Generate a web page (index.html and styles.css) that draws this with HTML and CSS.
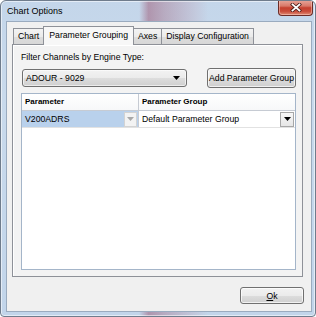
FILE: index.html
```html
<!DOCTYPE html>
<html>
<head>
<meta charset="utf-8">
<title>Chart Options</title>
<link rel="stylesheet" href="styles.css">
</head>
<body>
<div class="window">
  <div class="titlebar">
    <span class="title">Chart Options</span>
    <div class="close">
      <svg width="12" height="9" viewBox="0 0 12 9"><path d="M2.5 1.5 L9.5 7.5 M9.5 1.5 L2.5 7.5" stroke="#4a1c18" stroke-width="3.4" stroke-linecap="square"/><path d="M2.5 1.5 L9.5 7.5 M9.5 1.5 L2.5 7.5" stroke="#ffffff" stroke-width="1.8" stroke-linecap="square"/></svg>
    </div>
  </div>
  <div class="client">
    <div class="tabs">
      <div class="tab">Chart</div>
      <div class="tab active">Parameter Grouping</div>
      <div class="tab">Axes</div>
      <div class="tab">Display Configuration</div>
    </div>
    <div class="panel">
      <div class="label">Filter Channels by Engine Type:</div>
      <div class="controls">
        <div class="combo">
          <span class="combo-text">ADOUR - 9029</span>
          <svg class="arrow" width="7" height="4" viewBox="0 0 7 4"><polygon points="0,0 7,0 3.5,4" fill="#000"/></svg>
        </div>
        <div class="btn add">Add Parameter Group</div>
      </div>
      <div class="grid">
        <div class="grid-head">
          <div class="hc c1">Parameter</div>
          <div class="hc c2">Parameter Group</div>
        </div>
        <div class="grid-row">
          <div class="cell c1 sel">
            <span class="cell-text">V200ADRS</span>
            <span class="dd dis"><svg width="7" height="4" viewBox="0 0 7 4"><polygon points="0,0 7,0 3.5,4" fill="#a8a8a8"/></svg></span>
          </div>
          <div class="cell c2">
            <span class="cell-text">Default Parameter Group</span>
            <span class="dd"><svg width="7" height="4" viewBox="0 0 7 4"><polygon points="0,0 7,0 3.5,4" fill="#000"/></svg></span>
          </div>
        </div>
      </div>
    </div>
    <div class="footer">
      <div class="btn ok"><u>O</u>k</div>
    </div>
  </div>
</div>
</body>
</html>
```

FILE: styles.css
```css
* { box-sizing: border-box; }
html, body { margin: 0; padding: 0; }
body {
  width: 316px;
  height: 317px;
  overflow: hidden;
  font-family: "Liberation Sans", Arial, sans-serif;
  font-size: 8.7px;
  color: #000;
  background: #ffffff;
}
.window {
  width: 316px;
  height: 317px;
  border: 1px solid #6f7c8c;
  border-radius: 6px 6px 4px 4px;
  display: flex;
  flex-direction: column;
  background:
    linear-gradient(90deg, rgba(0,0,0,0) 0%, rgba(0,0,0,0) 44%, rgba(150,70,100,0.45) 47%, rgba(160,90,115,0.35) 52%, rgba(190,150,170,0.2) 62%, rgba(0,0,0,0) 66%, rgba(0,0,0,0) 100%),
    linear-gradient(180deg, #c4d6ea 0%, #c9daec 30%, #c2d5ea 100%);
  box-shadow: inset 0 0 0 1px rgba(255,255,255,0.55);
  overflow: hidden;
}
.titlebar {
  height: 20px;
  display: flex;
  justify-content: space-between;
  align-items: flex-start;
  flex: none;
}
.title {
  padding-left: 6px;
  padding-top: 5px;
  font-size: 9px;
  line-height: 11px;
  color: #000;
}
.close {
  width: 35px;
  height: 16px;
  margin-top: -1px;
  margin-right: 2px;
  border: 1px solid #6b2c27;
  border-top: none;
  border-radius: 0 0 4px 4px;
  background: linear-gradient(180deg, #e7a89c 0%, #d9796a 40%, #c5402f 52%, #c94c3a 75%, #de8b74 100%);
  box-shadow: inset 0 0 0 1px rgba(255,210,200,0.5);
  display: flex;
  align-items: center;
  justify-content: center;
}
.client {
  flex: 1;
  margin: 0 3px 4px 5px;
  border: 1px solid #9aabbf;
  background: #f0f0f0;
  display: flex;
  flex-direction: column;
  padding: 4px 8px 0 5px;
}
.tabs {
  display: flex;
  align-items: flex-end;
  height: 19px;
  margin-left: 1px;
  margin-bottom: -1px;
  position: relative;
  z-index: 1;
  flex: none;
}
.tab {
  height: 16px;
  margin-bottom: 1px;
  padding: 0 4px;
  line-height: 15px;
  border: 1px solid #8e9198;
  border-bottom: none;
  border-right: none;
  background: linear-gradient(180deg, #f3f3f3 0%, #ebebeb 50%, #dddddd 51%, #d7d7d7 100%);
  white-space: nowrap;
}
.tab:last-child { border-right: 1px solid #8e9198; }
.tab.active {
  height: 19px;
  margin-bottom: 0;
  padding: 0 5px;
  line-height: 17px;
  border-right: 1px solid #8e9198;
  background: #f7f7f7;
}
.tab.active + .tab { border-left: none; }
.panel {
  flex: 1;
  border: 1px solid #8e9198;
  background: #f3f3f3;
  box-shadow: inset 1px 1px 0 #ffffff;
  padding: 7px 6px 6px 8px;
  display: flex;
  flex-direction: column;
}
.label {
  line-height: 11px;
  height: 11px;
}
.controls {
  margin-top: 5px;
  height: 20px;
  display: flex;
  justify-content: space-between;
  align-items: center;
}
.combo {
  width: 165px;
  height: 18px;
  margin-left: 1px;
  border: 1px solid #707070;
  border-radius: 3px;
  background: linear-gradient(180deg, #f2f2f2 0%, #ebebeb 50%, #dddddd 51%, #cfcfcf 100%);
  box-shadow: inset 0 0 0 1px rgba(255,255,255,0.6);
  display: flex;
  align-items: center;
  justify-content: space-between;
  padding: 0 6px 0 3px;
}
.combo-text { line-height: 14px; }
.arrow { display: block; }
.btn {
  border: 1px solid #707070;
  border-radius: 3px;
  background: linear-gradient(180deg, #f2f2f2 0%, #ebebeb 50%, #dddddd 51%, #cfcfcf 100%);
  box-shadow: inset 0 0 0 1px rgba(255,255,255,0.7);
  display: flex;
  align-items: center;
  justify-content: center;
  white-space: nowrap;
}
.btn.add {
  width: 89px;
  height: 20px;
}
.grid {
  flex: 1;
  margin-top: 5px;
  border: 1px solid #a4b5c9;
  background: #ffffff;
  display: flex;
  flex-direction: column;
}
.grid-head {
  display: flex;
  height: 17px;
  border-bottom: 1px solid #c6cbd3;
  background: linear-gradient(180deg, #ffffff 0%, #f7f8f9 100%);
}
.hc {
  font-weight: bold;
  font-size: 8px;
  line-height: 16px;
  padding-left: 3px;
}
.c1 { width: 117px; border-right: 1px solid #c6cbd3; flex: none; }
.c2 { flex: 1; }
.grid-row {
  display: flex;
  height: 17px;
  border-bottom: 1px solid #e2e2e2;
}
.cell {
  display: flex;
  align-items: center;
  justify-content: space-between;
  padding: 0 1px 0 3px;
}
.cell.sel { background: #b9d1ec; }
.cell-text { line-height: 14px; }
.dd {
  width: 14px;
  height: 15px;
  border: 1px solid #a7a7a7;
  background: linear-gradient(180deg, #f7f7f7 0%, #e6e6e6 100%);
  display: flex;
  align-items: center;
  justify-content: center;
}
.dd.dis {
  width: 13px;
  border-color: #d3d3d3;
  background: #f3f3f3;
}
.footer {
  flex: none;
  display: flex;
  justify-content: flex-end;
  margin: 10px -1px 7px 0;
}
.btn.ok {
  width: 64px;
  height: 17px;
}
.btn.ok u { text-decoration: underline; }
```
